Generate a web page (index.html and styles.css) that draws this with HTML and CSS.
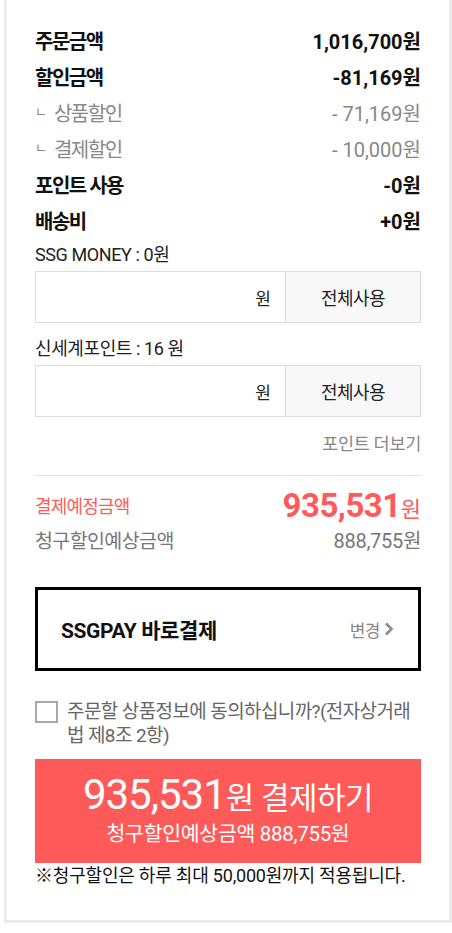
FILE: index.html
```html
<!DOCTYPE html>
<html lang="ko">
<head>
<meta charset="utf-8">
<link rel="stylesheet" href="styles.css">
</head>
<body>
<div class="panel">
  <div class="rows">
    <div class="row strong"><span class="lbl">주문금액</span><span class="num">1,016,700원</span></div>
    <div class="row strong"><span class="lbl">할인금액</span><span class="num">-81,169원</span></div>
    <div class="row sub"><span class="lbl"><i class="corner">ㄴ</i>상품할인</span><span class="num">- 71,169원</span></div>
    <div class="row sub"><span class="lbl"><i class="corner">ㄴ</i>결제할인</span><span class="num">- 10,000원</span></div>
    <div class="row strong"><span class="lbl">포인트 사용</span><span class="num">-0원</span></div>
    <div class="row strong"><span class="lbl">배송비</span><span class="num">+0원</span></div>
  </div>

  <div class="point-block">
    <div class="point-label">SSG MONEY : 0원</div>
    <div class="point-input">
      <div class="field"><span>원</span></div>
      <button class="use-all">전체사용</button>
    </div>
  </div>
  <div class="point-block second">
    <div class="point-label">신세계포인트 : 16 원</div>
    <div class="point-input">
      <div class="field"><span>원</span></div>
      <button class="use-all">전체사용</button>
    </div>
  </div>
  <div class="more"><span>포인트 더보기</span></div>

  <div class="totals">
    <div class="total-row pay"><span class="tlabel">결제예정금액</span><span class="big"><b>935,531</b>원</span></div>
    <div class="total-row est"><span class="tlabel">청구할인예상금액</span><span class="estnum">888,755원</span></div>
  </div>

  <div class="paybox">
    <span class="paytitle">SSGPAY 바로결제</span>
    <span class="change">변경<svg width="10" height="14" viewBox="0 0 10 14"><path d="M2 1.5 L7.5 7 L2 12.5" fill="none" stroke="#8c8c8c" stroke-width="2.6"/></svg></span>
  </div>

  <label class="agree">
    <span class="box"></span>
    <span class="agree-text">주문할 상품정보에 동의하십니까?(전자상거래법 제8조 2항)</span>
  </label>

  <div class="paybtn">
    <div class="paybtn-main"><b>935,531</b>원 결제하기</div>
    <div class="paybtn-sub">청구할인예상금액 888,755원</div>
  </div>
  <p class="note">※청구할인은 하루 최대 50,000원까지 적용됩니다.</p>
</div>
</body>
</html>
```

FILE: styles.css
```css
* { box-sizing: border-box; }
html, body { margin: 0; padding: 0; background: #fff; }
body {
  font-family: Roboto, "Noto Sans CJK KR", sans-serif;
  color: #222;
}
.panel {
  margin-left: 4px;
  width: 448px;
  border: 3px solid #ebebeb;
  border-top: none;
  padding: 22px 28px 32px;
}
.rows { display: flex; flex-direction: column; }
.row {
  display: flex;
  justify-content: space-between;
  align-items: center;
  height: 36px;
  font-size: 20px;
}
.row .lbl { letter-spacing: -1.5px; display: flex; align-items: center; }
.row .num { letter-spacing: 0; }
.row.strong { font-weight: 700; color: #111; }
.row.sub { color: #888; }
.corner { font-style: normal; font-size: 13px; margin-right: 7px; position: relative; top: -2px; letter-spacing: 0; }

.point-block { margin-top: 7px; }
.point-block.second { margin-top: 16px; }
.point-label { font-size: 18px; color: #222; line-height: 20px; letter-spacing: -0.4px; }
.point-input {
  display: flex;
  height: 52px;
  margin-top: 6px;
  border: 1px solid #dedede;
}
.field {
  flex: 1;
  display: flex;
  align-items: center;
  justify-content: flex-end;
  padding-right: 14px;
  font-size: 17px;
  color: #222;
}
.use-all {
  width: 135px;
  border: none;
  border-left: 1px solid #dedede;
  background: #f8f8f8;
  font-family: inherit;
  font-size: 18px;
  color: #222;
  letter-spacing: -0.5px;
}
.more {
  display: flex;
  justify-content: flex-end;
  margin-top: 16px;
  font-size: 17.5px;
  line-height: 22px;
  color: #888;
  padding-bottom: 20px;
  border-bottom: 1px solid #e2e2e2;
  letter-spacing: -0.3px;
}
.totals { padding-top: 11px; }
.total-row {
  display: flex;
  justify-content: space-between;
  align-items: center;
}
.total-row.pay { color: #ff5a5a; font-size: 18px; height: 36px; }
.total-row.pay .tlabel { letter-spacing: -0.8px; }
.big { font-size: 22px; }
.big b { font-size: 33px; font-weight: 700; letter-spacing: -0.5px; }
.total-row.est { color: #777; font-size: 19.5px; height: 33px; }
.total-row.est .tlabel { letter-spacing: -0.6px; }
.estnum { font-size: 20px; letter-spacing: -0.3px; }

.paybox {
  margin-top: 31px;
  height: 84px;
  border: 3px solid #000;
  display: flex;
  justify-content: space-between;
  align-items: center;
  padding: 0 24px 0 23px;
}
.paytitle { font-size: 21px; font-weight: 700; color: #111; letter-spacing: -0.4px; }
.change { font-size: 17px; color: #888; display: flex; align-items: center; gap: 4px; letter-spacing: -0.5px; }

.agree {
  display: flex;
  gap: 9px;
  margin-top: 29px;
  font-size: 19px;
  color: #666;
  line-height: 24px;
  letter-spacing: -0.6px;
}
.box {
  flex: 0 0 23px;
  width: 23px;
  height: 22px;
  border: 2px solid #a9a9a9;
  margin-top: 1px;
}
.paybtn {
  margin-top: 11px;
  height: 104px;
  background: #ff5a5a;
  color: #fff;
  display: flex;
  flex-direction: column;
  align-items: center;
  justify-content: center;
  padding-bottom: 2px;
}
.paybtn-main { font-size: 31px; line-height: 44px; letter-spacing: -0.5px; }
.paybtn-main b { font-size: 42px; font-weight: 400; letter-spacing: -1px; }
.paybtn-sub { font-size: 20.5px; line-height: 26px; letter-spacing: -0.3px; }
.note { margin: 1px 0 0; font-size: 18px; line-height: 24px; color: #111; letter-spacing: -0.2px; }
```
